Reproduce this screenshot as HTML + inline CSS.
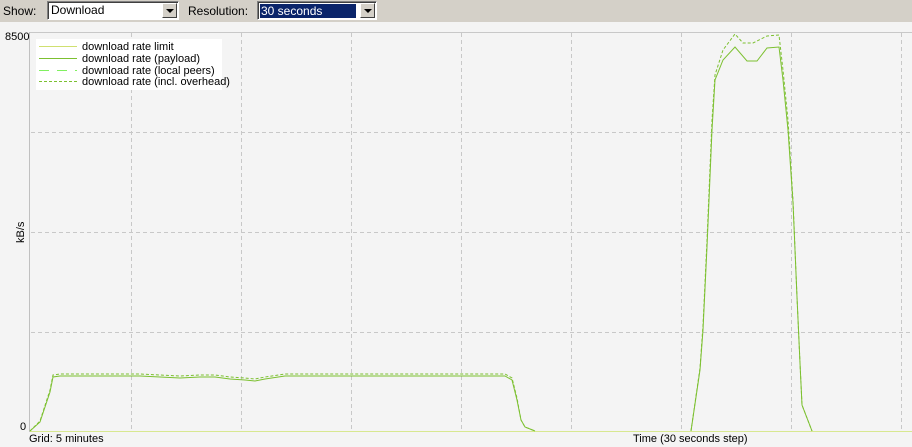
<!DOCTYPE html>
<html><head><meta charset="utf-8"><style>
html,body{margin:0;padding:0;width:912px;height:447px;overflow:hidden;background:#f4f4f4;font-family:"Liberation Sans",sans-serif;font-size:11px}
.bar{position:absolute;left:0;top:0;width:912px;height:22px;background:#d4d0c8}
.lbl{position:absolute;top:4px;font-size:12px;color:#000}
.cb{position:absolute;top:1px;height:17px;border:1px solid;border-color:#808080 #fff #fff #808080;box-shadow:inset 1px 1px 0 #404040;background:#fff;font-size:12px;line-height:17px;padding-left:3px;box-sizing:content-box}
.cb .btn{position:absolute;right:1px;top:1px;width:15px;height:15px;background:#d4d0c8;border:1px solid;border-color:#fff #404040 #404040 #fff;box-sizing:border-box}
.cb .btn:after{content:"";position:absolute;left:3px;top:5px;border-left:4px solid transparent;border-right:4px solid transparent;border-top:4px solid #000}
.sel{position:absolute;left:2px;top:2px;height:14px;line-height:14px;background:#0a246a;color:#fff;padding-left:1px}
svg{position:absolute;left:0;top:0}
</style></head><body>
<div class="bar"></div>
<div class="lbl" style="left:3px">Show:</div>
<div class="cb" style="left:47px;width:127px">Download<div class="btn"></div></div>
<div class="lbl" style="left:188px">Resolution:</div>
<div class="cb" style="left:257px;width:115px"><div class="sel" style="width:95px">30 seconds</div><div class="btn"></div></div>
<svg width="912" height="447" xmlns="http://www.w3.org/2000/svg" font-family="Liberation Sans, sans-serif" font-size="11">
<g stroke="#c8c8c8" stroke-dasharray="4,3" stroke-width="1">
<line x1="131.5" y1="33" x2="131.5" y2="431"/><line x1="241.5" y1="33" x2="241.5" y2="431"/><line x1="351.5" y1="33" x2="351.5" y2="431"/><line x1="461.5" y1="33" x2="461.5" y2="431"/><line x1="571.5" y1="33" x2="571.5" y2="431"/><line x1="681.5" y1="33" x2="681.5" y2="431"/><line x1="791.5" y1="33" x2="791.5" y2="431"/><line x1="901.5" y1="33" x2="901.5" y2="431"/>
<line x1="31" y1="132.5" x2="912" y2="132.5"/><line x1="31" y1="232.5" x2="912" y2="232.5"/><line x1="31" y1="332.5" x2="912" y2="332.5"/>
</g>
<line x1="30" y1="32.5" x2="912" y2="32.5" stroke="#c8c8c8"/>
<line x1="29.5" y1="32" x2="29.5" y2="432" stroke="#c0c0c0"/>
<line x1="30" y1="431.5" x2="912" y2="431.5" stroke="#d8e890"/>
<rect x="36" y="39" width="186" height="51" fill="#fff"/>
<line x1="39" y1="46.5" x2="77" y2="46.5" stroke="#d0e070"/>
<line x1="39" y1="58.5" x2="77" y2="58.5" stroke="#7cc030"/>
<line x1="39" y1="70.5" x2="77" y2="70.5" stroke="#80f060" stroke-dasharray="10,8"/>
<line x1="39" y1="81.5" x2="77" y2="81.5" stroke="#7cc030" stroke-dasharray="3,2"/>
<g fill="#000"><text x="82" y="50">download rate limit</text><text x="82" y="62">download rate (payload)</text><text x="82" y="74">download rate (local peers)</text><text x="82" y="85">download rate (incl. overhead)</text></g>
<g fill="none" stroke="#7cc030" stroke-width="1">
<polyline points="30,431 40,422 50,392 53,377 60,376 100,376 140,376 160,377 180,378 200,377 215,377 230,379 245,380 255,381 265,379 285,376 320,376 350,376 420,376 505,376 512,380 517,400 521,420 525,427 535,431"/>
<polyline stroke-dasharray="3,2" points="30,431 40,421 50,390 53,375 60,374 100,374 140,374 160,375 180,376 200,375 215,375 230,377 245,378 255,379 265,377 285,374 320,374 350,374 420,374 505,374 512,378 517,398 521,420 525,427 535,431"/>
<polyline points="691,431 700,370 703,330 707,247 712,130 715,80 723,60 735,47 747,61 757,61 767,48 779,47 783,80 788,130 793,203 797,297 800,363 802,405 812,431"/>
<polyline stroke-dasharray="3,2" points="691,431 700,368 703,325 707,240 712,120 715,75 723,50 735,34 743,43 753,43 767,36 779,35 783,70 788,120 793,200 797,297 800,363 802,405 812,431"/>
</g>
<g fill="#000">
<text x="5" y="40">8500</text>
<text x="20" y="430">0</text>
<text x="29" y="442">Grid: 5 minutes</text>
<text x="633" y="442">Time (30 seconds step)</text>
<text transform="translate(24,243) rotate(-90)">kB/s</text>
</g>
</svg>
</body></html>
